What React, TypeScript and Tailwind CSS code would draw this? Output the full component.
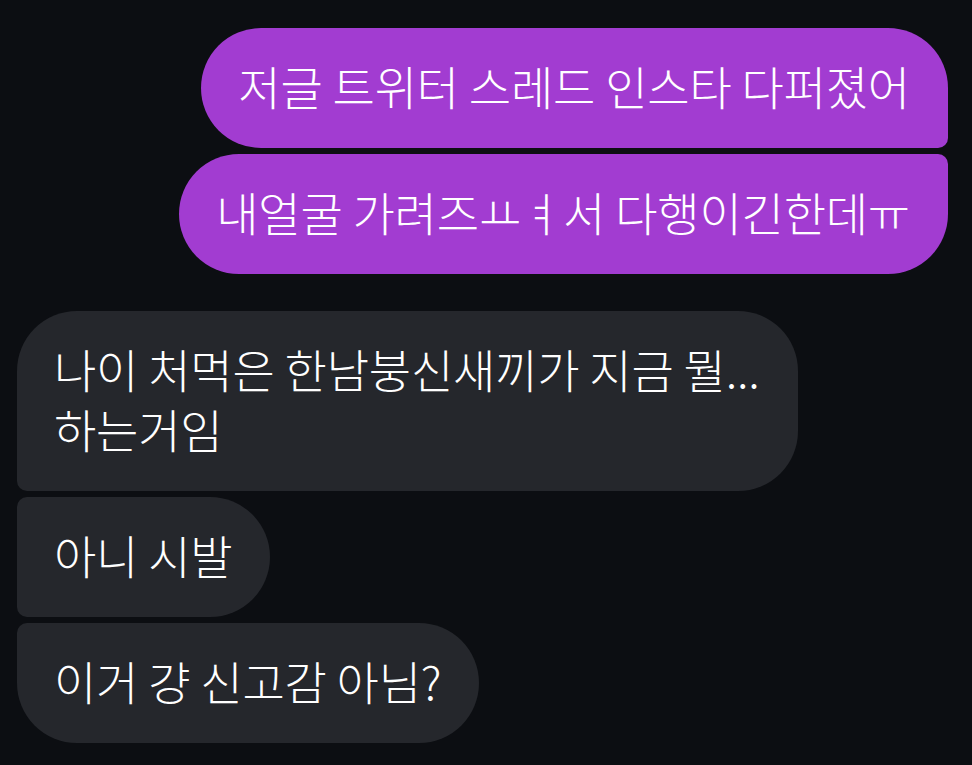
import React from "react";

interface Message {
  text: string[];
  mine: boolean;
  corners: string;
}

const messages: Message[][] = [
  [
    { text: ["저글 트위터 스레드 인스타 다퍼졌어"], mine: true, corners: "rounded-[60px] rounded-br-[10px]" },
    { text: ["내얼굴 가려즈ㅛㅕ서 다행이긴한데ㅠ"], mine: true, corners: "rounded-[60px] rounded-tr-[10px]" },
  ],
  [
    { text: ["나이 처먹은 한남붕신새끼가 지금 뭘...", "하는거임"], mine: false, corners: "rounded-[60px] rounded-bl-[10px]" },
    { text: ["아니 시발"], mine: false, corners: "rounded-[60px] rounded-tl-[10px] rounded-bl-[10px]" },
    { text: ["이거 걍 신고감 아님?"], mine: false, corners: "rounded-[60px] rounded-tl-[10px]" },
  ],
];

export default function App(): JSX.Element {
  return (
    <div
      className="w-[972px] h-[765px] bg-[#0c0e12] pt-[28px] pl-[17px] pr-[24px] flex flex-col gap-[37px] overflow-hidden"
      style={{ fontFamily: '"Noto Sans CJK KR", "Noto Sans", sans-serif' }}
    >
      {messages.map((group, gi) => (
        <div key={gi} className="flex flex-col gap-[6px]">
          {group.map((m, i) => (
            <div key={i} className={`flex ${m.mine ? "justify-end" : "justify-start"}`}>
              <div
                className={`${m.corners} ${
                  m.mine ? "bg-[#a23cd1]" : "bg-[#25272c]"
                } text-white text-[46px] font-light leading-[60px] pt-[27px] pb-[33px] pl-[37px] pr-[38px] tracking-[-0.2px]`}
              >
                {m.text.map((line, li) => (
                  <div key={li} className="whitespace-nowrap">
                    {line}
                  </div>
                ))}
              </div>
            </div>
          ))}
        </div>
      ))}
    </div>
  );
}
